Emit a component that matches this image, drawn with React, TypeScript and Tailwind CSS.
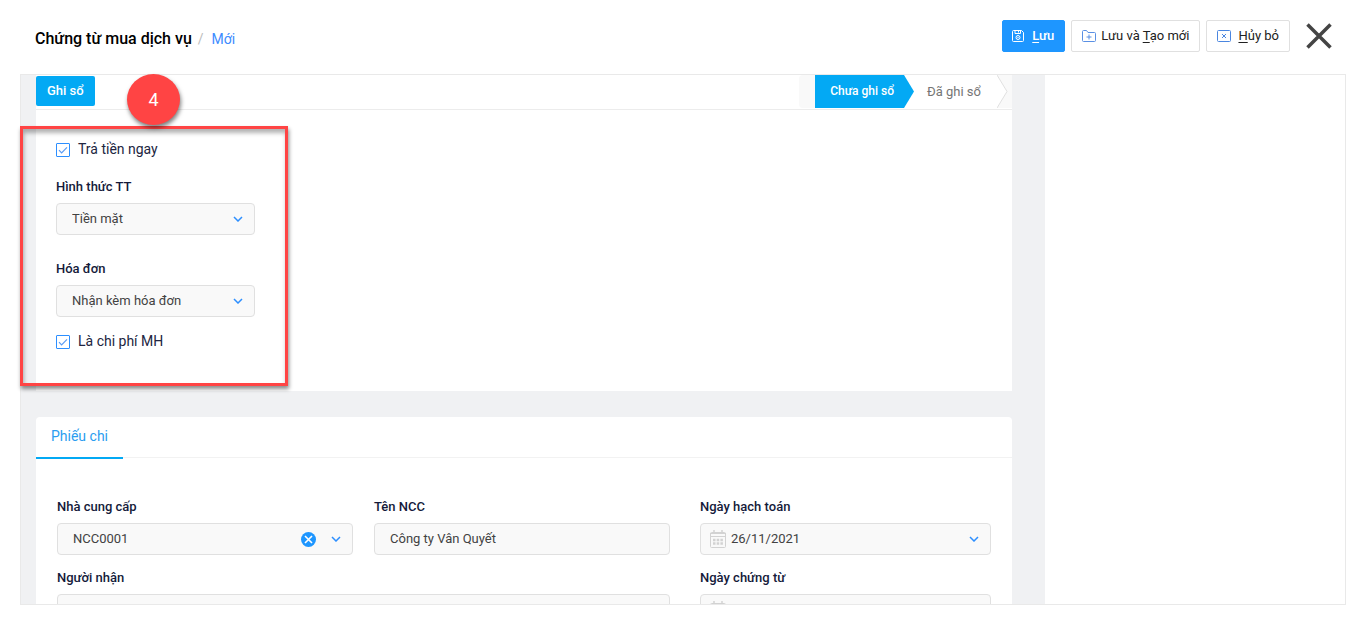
import React from 'react';

function ChevronIcon() {
  return (
    <svg width="10" height="6" viewBox="0 0 10 6" fill="none" className="pointer-events-none">
      <path d="M1 1l4 4 4-4" stroke="#2d8fff" strokeWidth="1.5" />
    </svg>
  );
}

function SaveIcon() {
  return (
    <svg width="12" height="12" viewBox="0 0 12 12" fill="none" stroke="currentColor">
      <path d="M.5 1.5v9a1 1 0 0 0 1 1h9a1 1 0 0 0 1-1v-8l-2-2h-8a1 1 0 0 0-1 1z" />
      <path d="M3 .5v3h5.500v-3M6.500 1v1.500" />
      <circle cx="6" cy="7.500" r="2" />
      <circle cx="6" cy="7.500" r=".3" />
    </svg>
  );
}

function FolderPlusIcon() {
  return (
    <svg width="14" height="12" viewBox="0 0 14 12" fill="none" stroke="#5a90e4">
      <path d="M.5 10.500v-9a1 1 0 0 1 1-1h3l1.500 2h6.500a1 1 0 0 1 1 1v7a1 1 0 0 1-1 1h-11a1 1 0 0 1-1-1z" />
      <path d="M7 4.500v5M4.500 7h5" />
    </svg>
  );
}

function CancelIcon() {
  return (
    <svg width="14" height="12" viewBox="0 0 14 12" fill="none" stroke="#4a86e0">
      <rect x=".5" y=".5" width="13" height="11" rx="1" />
      <path d="M5 4l4 4M9 4l-4 4" />
    </svg>
  );
}

function CalendarIcon() {
  return (
    <svg width="16" height="18" viewBox="0 0 16 18" fill="none" stroke="#d2d2d2">
      <rect x=".5" y="2.500" width="15" height="15" rx="1" />
      <path d="M0 3.500h16M0 6.500h16" />
      <path d="M4 0v3M12 0v3" strokeWidth="1.500" />
      <path d="M3 10h10M3 13.500h10" strokeWidth="2.500" strokeDasharray="2.500 1.200" />
    </svg>
  );
}

const inputClass =
  'block w-full h-8 rounded border border-[#e0e0e0] bg-[#f9f9f9] px-[15px] text-[13px] text-[#424242] outline-none';

function Field({ id, label, children }: { id: string; label: string; children: React.ReactNode }) {
  return (
    <div className="flex flex-col gap-1.5">
      <label htmlFor={id} className="text-[13px] leading-5 font-medium text-[#141a3a]">
        {label}
      </label>
      {children}
    </div>
  );
}

function SelectField({ id, label, options }: { id: string; label: string; options: string[] }) {
  return (
    <Field id={id} label={label}>
      <div className="relative">
        <select id={id} className={`${inputClass} appearance-none`}>
          {options.map((o) => (
            <option key={o}>{o}</option>
          ))}
        </select>
        <div className="pointer-events-none absolute inset-y-0 right-3 flex items-center">
          <ChevronIcon />
        </div>
      </div>
    </Field>
  );
}

function DateField({ id, label, value }: { id: string; label: string; value?: string }) {
  return (
    <Field id={id} label={label}>
      <div className="relative">
        <input id={id} type="text" defaultValue={value} className={`${inputClass} pb-0.5 pl-[30px]`} />
        <div className="pointer-events-none absolute inset-y-0 left-2.5 flex items-center">
          <CalendarIcon />
        </div>
        <div className="pointer-events-none absolute inset-y-0 right-3 flex items-center">
          <ChevronIcon />
        </div>
      </div>
    </Field>
  );
}

function Checkbox({ label }: { label: string }) {
  return (
    <label className="flex items-center gap-2 text-sm text-[#212541]">
      <span className="relative block size-3.5">
        <input
          type="checkbox"
          defaultChecked
          className="peer block size-3.5 appearance-none rounded-[1px] border border-[#2d8fff] bg-white"
        />
        <svg
          viewBox="0 0 14 14"
          fill="none"
          className="pointer-events-none absolute inset-0 hidden size-3.5 peer-checked:block"
        >
          <path d="M3 7.200l2.600 2.600L11 4.400" stroke="#5a9bf5" strokeWidth="1.200" />
        </svg>
      </span>
      <span className="pb-0.5 leading-[18px]">{label}</span>
    </label>
  );
}

function Header() {
  const button =
    'flex h-8 items-center rounded-xs border text-[13px] whitespace-nowrap';

  return (
    <header className="flex h-[72px] shrink-0 items-center justify-between pl-[35px] pr-[33px]">
      <nav className="flex items-center pt-1.5">
        <h1 className="text-base font-medium text-black">Chứng từ mua dịch vụ</h1>
        <span className="ml-1.5 text-sm text-[#bdbdbd]">/</span>
        <a href="#" className="ml-2 text-sm text-[#3d8bff]">
          Mới
        </a>
      </nav>
      <div className="flex items-center gap-1.5">
        <button className={`${button} gap-2 border-[#1e96ff] bg-[#1e96ff] pr-2.5 pl-[9px] font-medium text-white`}>
          <SaveIcon />
          <span>
            <u className="underline-offset-2">L</u>ưu
          </span>
        </button>
        <button className={`${button} gap-[5px] border-[#e0e0e0] bg-white px-2.5 text-[#212121]`}>
          <FolderPlusIcon />
          <span>
            Lưu và <u className="underline-offset-2">T</u>ạo mới
          </span>
        </button>
        <button className={`${button} gap-[7px] border-[#e0e0e0] bg-white px-2.5 text-[#212121]`}>
          <CancelIcon />
          <span>
            <u className="underline-offset-2">H</u>ủy bỏ
          </span>
        </button>
        <button aria-label="Đóng" className="ml-2.5">
          <svg width="26" height="26" viewBox="0 0 26 26" fill="none" className="block">
            <path d="M1.500 1.500l23 23M24.500 1.500l-23 23" stroke="#444" strokeWidth="3.500" />
          </svg>
        </button>
      </div>
    </header>
  );
}

function StatusSteps() {
  return (
    <ol className="flex h-[33px] items-stretch text-[13px]">
      <li className="w-4 rounded-l bg-[#f9f9f9]" />
      <li className="flex">
        <span className="flex items-center bg-[#03a9f4] pr-2.5 pb-px pl-[15px] text-xs font-medium text-white">
          Chưa ghi sổ
        </span>
        <svg width="10" height="33" viewBox="0 0 10 33">
          <path d="M0 0l10 16.500L0 33z" fill="#03a9f4" />
        </svg>
      </li>
      <li className="flex">
        <span className="flex items-center pr-4 pl-[13px] text-[#757575]">Đã ghi sổ</span>
        <svg width="15" height="33" viewBox="0 0 15 33" fill="none">
          <path d="M0 0h15v33H0l10-16.500z" fill="#f9f9f9" />
          <path d="M0 0l10 16.500L0 33" stroke="#e0e0e0" />
        </svg>
      </li>
    </ol>
  );
}

export default function App() {
  return (
    <div className="flex h-screen flex-col bg-white font-['Roboto',sans-serif]">
      <Header />

      <main className="relative mt-0.5 mr-[19px] mb-[18px] ml-5 min-h-0 flex-1 border border-[#e9e9e9]">
        <div className="flex h-full overflow-hidden">
          <div className="flex min-w-0 flex-1 flex-col gap-[26px] bg-[#f0f1f3] pr-[33px] pl-[15px]">
            {/* Posting status + payment options */}
            <section className="shrink-0 bg-white">
              <div className="flex h-[35px] items-start justify-between border-b border-[#ececec]">
                <button className="mt-px h-[30px] rounded-xs bg-[#03a9f4] px-[11px] text-[13px] font-medium text-white">
                  Ghi sổ
                </button>
                <StatusSteps />
              </div>
              <div className="w-[239px] px-5 pt-[30px] pb-[39px]">
                <Checkbox label="Trả tiền ngay" />
                <div className="mt-[17px] mb-[15px] flex flex-col gap-6">
                  <SelectField id="payment" label="Hình thức TT" options={['Tiền mặt']} />
                  <SelectField id="invoice" label="Hóa đơn" options={['Nhận kèm hóa đơn']} />
                </div>
                <Checkbox label="Là chi phí MH" />
              </div>
            </section>

            {/* Payment voucher */}
            <section className="shrink-0 rounded bg-white">
              <div className="flex h-[41px] border-b border-[#f2f2f2]" role="tablist">
                <button
                  role="tab"
                  aria-selected="true"
                  className="h-[42px] border-b-2 border-[#03a9f4] px-[15px] pb-0.5 text-sm text-[#2b9df0]"
                >
                  Phiếu chi
                </button>
              </div>
              <div className="flex gap-[30px] px-[21px] pt-[39px] pb-5">
                <div className="grid flex-1 grid-cols-2 gap-x-[21px] gap-y-[13px]">
                  <Field id="supplier" label="Nhà cung cấp">
                    <div className="relative">
                      <input id="supplier" type="text" defaultValue="NCC0001" className={`${inputClass} pb-0.5`} />
                      <div className="absolute inset-y-0 right-3 flex items-center gap-[15px]">
                        <button aria-label="Xóa">
                          <svg width="15" height="15" viewBox="0 0 15 15" fill="none" className="block">
                            <circle cx="7.500" cy="7.500" r="7.500" fill="#1e96ff" />
                            <path d="M4 4l7 7M11 4l-7 7" stroke="#fff" strokeWidth="1.600" />
                          </svg>
                        </button>
                        <ChevronIcon />
                      </div>
                    </div>
                  </Field>
                  <Field id="supplierName" label="Tên NCC">
                    <input
                      id="supplierName"
                      type="text"
                      defaultValue="Công ty Vân Quyết"
                      className={`${inputClass} pb-0.5`}
                    />
                  </Field>
                  <div className="col-span-2">
                    <Field id="receiver" label="Người nhận">
                      <input id="receiver" type="text" className={inputClass} />
                    </Field>
                  </div>
                </div>
                <div className="flex w-[291px] flex-col gap-[13px]">
                  <DateField id="postingDate" label="Ngày hạch toán" value="26/11/2021" />
                  <DateField id="voucherDate" label="Ngày chứng từ" />
                </div>
              </div>
            </section>
          </div>
          <aside className="w-[300px] shrink-0 bg-white" />
        </div>

        {/* Step callout */}
        <div className="pointer-events-none absolute top-[51px] -left-px h-[260px] w-[268px] border-3 border-[#ff4444] shadow-[1px_3px_4px_rgba(0,0,0,0.45),inset_1px_4px_4px_rgba(0,0,0,0.3)]" />
        <div className="absolute -top-px left-[106px] flex h-[51px] w-[53px] items-center justify-center rounded-[50%] bg-[#ff4444] text-lg text-white shadow-[1px_3px_4px_rgba(0,0,0,0.5)]">
          4
        </div>
      </main>
    </div>
  );
}
